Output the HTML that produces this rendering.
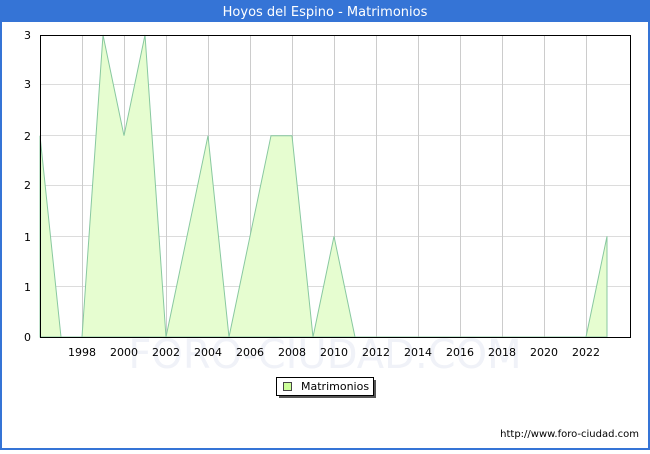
<!DOCTYPE html>
<html><head><style>
body{margin:0;width:650px;height:450px;overflow:hidden;font-family:"DejaVu Sans","Liberation Sans",sans-serif;}
</style></head><body>
<svg width="650" height="450" xmlns="http://www.w3.org/2000/svg" font-family="DejaVu Sans, Liberation Sans, sans-serif">
<rect x="0" y="0" width="650" height="450" fill="#3574d6"/>
<rect x="2" y="22" width="646" height="426" fill="#fff"/>
<text x="325" y="16" fill="#fff" font-size="13" text-anchor="middle">Hoyos del Espino - Matrimonios</text>
<g stroke="#dcdcdc" stroke-width="1">
<line x1="40" y1="84.5" x2="630" y2="84.5"/><line x1="40" y1="135.5" x2="630" y2="135.5"/><line x1="40" y1="185.5" x2="630" y2="185.5"/><line x1="40" y1="236.5" x2="630" y2="236.5"/><line x1="40" y1="286.5" x2="630" y2="286.5"/>
</g>
<g stroke="#cccccc" stroke-width="1">
<line x1="82.5" y1="35" x2="82.5" y2="337"/><line x1="124.5" y1="35" x2="124.5" y2="337"/><line x1="166.5" y1="35" x2="166.5" y2="337"/><line x1="208.5" y1="35" x2="208.5" y2="337"/><line x1="250.5" y1="35" x2="250.5" y2="337"/><line x1="292.5" y1="35" x2="292.5" y2="337"/><line x1="334.5" y1="35" x2="334.5" y2="337"/><line x1="376.5" y1="35" x2="376.5" y2="337"/><line x1="418.5" y1="35" x2="418.5" y2="337"/><line x1="460.5" y1="35" x2="460.5" y2="337"/><line x1="502.5" y1="35" x2="502.5" y2="337"/><line x1="544.5" y1="35" x2="544.5" y2="337"/><line x1="586.5" y1="35" x2="586.5" y2="337"/>
</g>
<text x="325" y="368" font-size="40" fill="#f0f2f8" text-anchor="middle">FORO-CIUDAD.COM</text>
<polygon fill="#e6fdd0" stroke="#88c8a0" stroke-width="1" points="40,337 40,135.7 61,337 82,337 103,35 124,135.7 145,35 166,337 187,236.3 208,135.7 229,337 250,236.3 271,135.7 292,135.7 313,337 334,236.3 355,337 586,337 607,236.3 607,337"/>
<rect x="40.5" y="35.5" width="590" height="302" fill="none" stroke="#000" stroke-width="1"/>
<g font-size="11" fill="#000" text-anchor="end">
<text x="31" y="39">3</text><text x="31" y="88">3</text><text x="31" y="140">2</text><text x="31" y="189">2</text><text x="31" y="241">1</text><text x="31" y="291">1</text><text x="31" y="341">0</text>
</g>
<g font-size="11" fill="#000" text-anchor="middle">
<text x="82" y="356">1998</text><text x="124" y="356">2000</text><text x="166" y="356">2002</text><text x="208" y="356">2004</text><text x="250" y="356">2006</text><text x="292" y="356">2008</text><text x="334" y="356">2010</text><text x="376" y="356">2012</text><text x="418" y="356">2014</text><text x="460" y="356">2016</text><text x="502" y="356">2018</text><text x="544" y="356">2020</text><text x="586" y="356">2022</text>
</g>
<rect x="279" y="380" width="97" height="18" fill="#555"/>
<rect x="276.5" y="377.5" width="97" height="18" fill="#fff" stroke="#000"/>
<rect x="283.5" y="382.5" width="8" height="8" fill="#ccff99" stroke="#444"/>
<text x="301" y="390" font-size="11">Matrimonios</text>
<text x="639" y="437" font-size="10" text-anchor="end">http://www.foro-ciudad.com</text>
</svg>
</body></html>
